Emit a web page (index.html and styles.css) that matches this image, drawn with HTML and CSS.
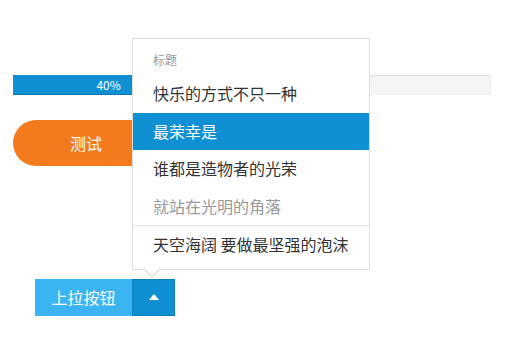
FILE: index.html
```html
<!DOCTYPE html>
<html lang="zh-CN">
<head>
<meta charset="utf-8">
<link rel="stylesheet" href="styles.css">
</head>
<body>
<div class="page">
  <div class="progress">
    <div class="progress-bar" style="width: 40%">40%</div>
  </div>
  <button class="btn-round">测试</button>
  <div class="dropup">
    <div class="btn-group">
      <button class="btn btn-secondary">上拉按钮</button>
      <button class="btn btn-primary btn-caret" aria-label="toggle">
        <svg width="10" height="6" viewBox="0 0 10 6"><path d="M0 6 L4.2 0.8 Q5 0 5.8 0.8 L10 6 Z" fill="#fff"/></svg>
      </button>
    </div>
    <ul class="dropdown-content">
      <li class="dropdown-header">标题</li>
      <li><a>快乐的方式不只一种</a></li>
      <li class="active"><a>最荣幸是</a></li>
      <li><a>谁都是造物者的光荣</a></li>
      <li class="disabled"><a>就站在光明的角落</a></li>
      <li class="divider"></li>
      <li><a>天空海阔 要做最坚强的泡沫</a></li>
    </ul>
  </div>
</div>
</body>
</html>
```
FILE: styles.css
```css
* { box-sizing: border-box; }
html, body { margin: 0; padding: 0; background: #fff; }
body {
  font-family: "Noto Sans CJK SC", "Noto Sans", sans-serif;
  color: #333;
}
.page {
  padding: 75px 0 0 13px;
}
.progress {
  width: 478px;
  height: 20px;
  background: #f5f5f5;
  box-shadow: inset 0 1px 2px rgba(0,0,0,.1);
  overflow: hidden;
}
.progress-bar {
  height: 20px;
  background: #0e90d2;
  color: #fff;
  font-size: 12px;
  line-height: 20px;
  text-align: center;
  box-shadow: inset 0 -1px 0 rgba(0,0,0,.15);
}
.btn-round {
  display: block;
  margin-top: 25px;
  width: 146px;
  height: 46px;
  border: 0;
  border-radius: 23px;
  background: #f37b1d;
  color: #fff;
  font-family: inherit;
  font-size: 16px;
  padding: 0;
}
.dropup {
  position: relative;
  margin: 113px 0 0 22px;
  width: max-content;
}
.btn-group {
  display: flex;
}
.btn {
  font-family: inherit;
  font-size: 16px;
  line-height: 19.2px;
  padding: 8px 16px;
  border: 1px solid transparent;
  color: #fff;
  margin: 0;
  height: 37px;
}
.btn-secondary {
  background: #3bb4f2;
  border-color: #3bb4f2;
  width: 97px;
  padding: 8px 0;
  text-align: center;
}
.btn-primary {
  background: #0e90d2;
  border-color: #0c7ebb;
}
.btn-caret {
  width: 43px;
  padding: 0;
  display: flex;
  align-items: center;
  justify-content: center;
}
.btn-caret svg { display: block; margin: 0 0 1px 1px; }
.dropdown-content {
  position: absolute;
  left: 97px;
  bottom: 100%;
  margin: 0 0 9px;
  width: 238px;
  padding: 5px 0;
  list-style: none;
  background: #fff;
  border: 1px solid #ddd;
  line-height: 1.6;
}
.dropdown-content::before,
.dropdown-content::after {
  content: "";
  position: absolute;
  width: 0;
  height: 0;
  border-style: solid;
  border-color: transparent;
}
.dropdown-content::before {
  left: 11px;
  bottom: -17px;
  border-width: 8px;
  border-top-color: #ddd;
}
.dropdown-content::after {
  left: 12px;
  bottom: -14px;
  border-width: 7px;
  border-top-color: #fff;
}
.dropdown-content li a {
  display: block;
  padding: 6px 20px;
  font-size: 16px;
  color: #333;
  white-space: nowrap;
}
.dropdown-header {
  padding: 6px 20px;
  font-size: 12px;
  color: #999;
}
.dropdown-content li.active a {
  background: #0e90d2;
  color: #fff;
}
.dropdown-content li.disabled a {
  color: #999;
}
.divider {
  height: 1px;
  background: #e5e5e5;
  overflow: hidden;
}
```
